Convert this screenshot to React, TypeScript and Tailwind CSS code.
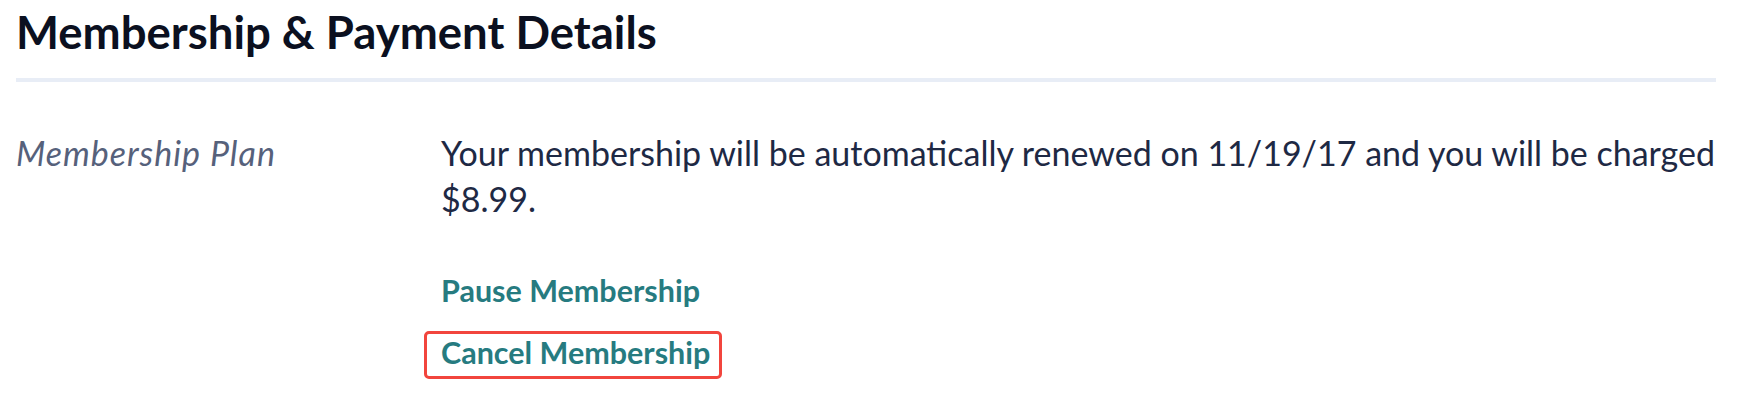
import React from 'react';

const App: React.FC = () => {
  return (
    <div className="min-h-[401px] bg-white pl-4 pr-4 pt-[4px] font-['Lato','Noto_Sans',sans-serif]">
      {/* Header */}
      <h1 className="text-[45.5px] leading-[56px] font-bold text-[#0b1020]">Membership &amp; Payment Details</h1>
      <div className="mt-[18px] mr-[7px] h-[4px] bg-[#e8edf6]" />

      {/* Plan row */}
      <div className="mt-[48px] flex">
        <div className="w-[425px] shrink-0 text-[34px] leading-[46px] tracking-[1px] italic text-[#56617b]">
          Membership Plan
        </div>
        <div className="flex-1">
          <p className="text-[34px] leading-[46px] text-[#1e2944]">
            Your membership will be automatically renewed on 11/19/17 and you will be charged $8.99.
          </p>
          <div className="mt-[48px] flex flex-col items-start gap-[21px]">
            <a href="#" className="text-[30.5px] leading-[40px] font-bold text-[#267b80]">
              Pause Membership
            </a>
            <a
              href="#"
              className="-ml-[17px] rounded-[5px] border-[3px] border-[#f2453d] pl-[14px] pr-[9px] pb-[6px] text-[30.5px] leading-[36px] font-bold text-[#267b80]"
            >
              Cancel Membership
            </a>
          </div>
        </div>
      </div>
    </div>
  );
};

export default App;
